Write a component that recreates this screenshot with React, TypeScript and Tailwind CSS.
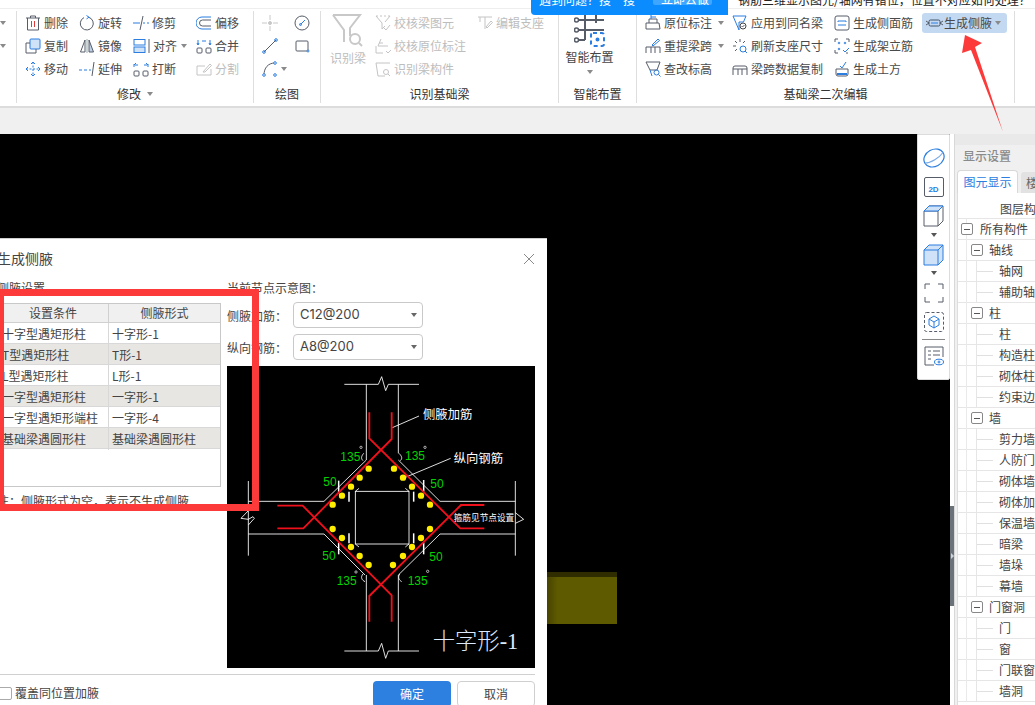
import React from "react";

const G = "#565c68";
const B = "#2b7de0";
const L = "#c4c4c4";

function S({ children, w = 16, h = 16, c = G }: { children: React.ReactNode; w?: number; h?: number; c?: string }) {
  return (
    <svg width={w} height={h} viewBox={`0 0 ${w} ${h}`} fill="none" stroke={c} strokeWidth="1" className="shrink-0">
      {children}
    </svg>
  );
}

function Caret({ c = "#8a8a8a" }: { c?: string }) {
  return <span className="inline-block w-0 h-0 border-x-[3px] border-x-transparent border-t-[4px]" style={{ borderTopColor: c }} />;
}

function Item({ icon, label, dis, caret, gap = 3 }: { icon: React.ReactNode; label: string; dis?: boolean; caret?: boolean; gap?: number }) {
  return (
    <div className={`flex items-center h-[23px] whitespace-nowrap text-[12px] ${dis ? "text-[#bdbdbd]" : "text-[#4a4a4a]"}`} style={{ gap }}>
      {icon}
      <span>{label}</span>
      {caret && (
        <span className="ml-[3px] flex items-center">
          <Caret />
        </span>
      )}
    </div>
  );
}

function GroupLabel({ text, caret }: { text: string; caret?: boolean }) {
  return (
    <div className="mt-auto h-[22px] pt-1 flex items-center justify-center gap-[6px] text-[12px] text-[#333]">
      <span>{text}</span>
      {caret && <Caret />}
    </div>
  );
}

const I = {
  del: (
    <S>
      <path d="M1 3h14M5.5 3V1h5v2M2.5 3v12h11V3" />
      <path d="M6.5 6v6M9.5 6v6" stroke="#e03a3a" />
    </S>
  ),
  copy: (
    <S>
      <rect x="5" y="1" width="10" height="10" rx="1" fill="#cfe2f8" stroke={B} />
      <path d="M5 5H1v10h10v-4" />
    </S>
  ),
  move: (
    <S c={B}>
      <path d="M8 1v14M1 8h14" strokeDasharray="2 1.5" />
      <path d="M6 3l2-2 2 2M6 13l2 2 2-2M3 6L1 8l2 2M13 6l2 2-2 2" />
    </S>
  ),
  rotate: (
    <S>
      <path d="M9.5 2.2A6.5 6.5 0 1 1 5 2.6" />
      <path d="M7.5 0.5l2.5 1.7-2.5 1.7" stroke={B} />
    </S>
  ),
  mirror: (
    <S>
      <path d="M6 2L1.5 14H6z" />
      <path d="M10 2l4.5 12H10z" fill="#bcd0e8" />
      <path d="M8 1v14" stroke="#9aa" />
    </S>
  ),
  extend: (
    <S>
      <path d="M0 9h3M5 9h3M10 9h2" stroke={B} />
      <path d="M15 1l-2 14" />
    </S>
  ),
  trim: (
    <S>
      <path d="M0 8h7" stroke={B} />
      <path d="M10 8h2M14 8h2" stroke={B} />
      <path d="M10 1L7 15" />
    </S>
  ),
  align: (
    <S w={19}>
      <rect x="1" y="1.5" width="11" height="5.5" stroke={B} />
      <rect x="1" y="9" width="11" height="5.5" stroke={B} fill="#cfe2f8" />
      <path d="M16 1v14" />
    </S>
  ),
  brk: (
    <S>
      <rect x="1" y="10" width="5" height="5" rx="1" />
      <rect x="10" y="10" width="5" height="5" rx="1" />
      <path d="M1 6V3M15 6V3M3 2L1 4M5 4H2M13 2l2 2M11 4h3" stroke={B} />
    </S>
  ),
  offset: (
    <S>
      <path d="M15 2H6a5.5 5.5 0 0 0 0 12h9" stroke={B} />
      <path d="M15 5H6.5a2.5 2.5 0 0 0 0 6H15" />
    </S>
  ),
  merge: (
    <S>
      <rect x="1" y="10" width="5" height="5" rx="1" />
      <rect x="10" y="10" width="5" height="5" rx="1" />
      <path d="M2 2v5M14 2v5M1 5l1 2 1-2M13 5l1 2 1-2M6 3l2 0M8 3l2 0" stroke={B} />
    </S>
  ),
  split: (
    <S c={L}>
      <path d="M15 8v6H1V5h8" />
      <path d="M7 11l7-8 1.5 1.5L9 11z" />
    </S>
  ),
  point: (
    <S c="#c8c8c8">
      <path d="M8 0v5M8 11v5M0 8h5M11 8h5" />
      <circle cx="8" cy="8" r="1.5" fill="#c8c8c8" />
    </S>
  ),
  circ: (
    <S>
      <circle cx="8" cy="8" r="7" />
      <path d="M6.5 9.5L11 5" stroke={B} />
      <circle cx="6.5" cy="9.5" r="1" stroke={B} />
    </S>
  ),
  line: (
    <S>
      <path d="M2 14L14 2" />
      <circle cx="2" cy="14" r="1.3" stroke={B} />
      <circle cx="14" cy="2" r="1.3" stroke={B} />
    </S>
  ),
  rect: (
    <S>
      <rect x="2" y="3" width="12" height="10" rx="1" />
      <circle cx="14" cy="13" r="1" stroke={B} fill="#fff" />
    </S>
  ),
  arc: (
    <S>
      <path d="M2 14C2 7 6 2 13 2" />
      <circle cx="2" cy="14" r="1.3" stroke={B} fill="#fff" />
      <circle cx="13" cy="2" r="1.3" stroke={B} fill="#fff" />
      <circle cx="13" cy="14" r="1.3" stroke={B} fill="#fff" />
    </S>
  ),
  chk1: (
    <S c={L}>
      <path d="M1 1h2M5 1h2M9 1h2M13 1h2M1 1l6 7v6l3-3M15 1l-5 6" />
      <path d="M9 13l2 2 4-5" />
    </S>
  ),
  chk2: (
    <S c={L}>
      <path d="M6 1L3 8h10M1 8v7h7M4 5h4M11 13l2 2 3-3" />
    </S>
  ),
  chk3: (
    <S c={L}>
      <path d="M15 2H1l2 13h7" />
      <circle cx="11" cy="11" r="2.5" />
      <path d="M13 13l2 2" />
    </S>
  ),
  seat: (
    <S c={L}>
      <path d="M1 2h14M3 2v5M8 2v12M9 12l5-6 1.5 1.5L10 13z" />
    </S>
  ),
  orig: (
    <S>
      <path d="M1 8h13l1 6H1z" />
      <path d="M4 8V4h8v4" />
      <path d="M6 4V0M6 2h5" stroke={B} />
    </S>
  ),
  reb: (
    <S>
      <path d="M1 15V9h14v6M6 9v6M10 9v6" />
      <path d="M7 7l6-6 1.5 1.5L8 8z" stroke={B} />
    </S>
  ),
  elev: (
    <S>
      <path d="M1 1h14l-3 8H5z" />
      <circle cx="11.5" cy="11.5" r="2.5" stroke={B} />
      <path d="M13.5 13.5l2 2M5 9l2 6" stroke={B} />
    </S>
  ),
  apply: (
    <S>
      <path d="M1 1h13l-2.5 6H7v8z" stroke={B} />
      <circle cx="11" cy="11" r="3" stroke="#444" />
      <path d="M9.5 11l1 1 2-2" />
    </S>
  ),
  fresh: (
    <S>
      <path d="M3 3l2 2M1 8h3M8 1v3M13 3l-2 2M3 13l2-2" />
      <circle cx="11" cy="11" r="3" stroke={B} />
      <path d="M13 13l2 2" stroke={B} />
    </S>
  ),
  span: (
    <S>
      <path d="M1 14V7a2 2 0 0 1 2-2h10a2 2 0 0 1 2 2v7M1 8h14M6 8v6M10 8v6" />
    </S>
  ),
  side: (
    <S>
      <rect x="1" y="1" width="14" height="14" rx="2" />
      <path d="M4 6h8M4 10h8M4 6v1M12 6v1" stroke={B} />
    </S>
  ),
  rack: (
    <S>
      <path d="M1 4V1h3M12 1h3v3M1 12v3h3M12 15h2" />
      <circle cx="5" cy="5" r=".8" stroke={B} />
      <circle cx="11" cy="5" r=".8" stroke={B} />
      <circle cx="5" cy="11" r=".8" stroke={B} />
      <path d="M9 12l2 2 4-4" stroke={B} />
    </S>
  ),
  earth: (
    <S>
      <path d="M2 8l12 0v5a2 2 0 0 1-2 2H4a2 2 0 0 1-2-2z" />
      <path d="M3 13h10" stroke={B} strokeWidth="2" />
      <path d="M6 5l2 2 4-6" stroke={B} />
    </S>
  ),
  haunch: (
    <S w={19}>
      <path d="M1 6l3 2-3 2M18 6l-3 2 3 2" />
      <rect x="4" y="5" width="11" height="6" rx="1.5" stroke="#456" />
      <path d="M6 8h7" stroke={B} />
    </S>
  ),
};

const rows = [
  ["十字型遇矩形柱", "十字形-1"],
  ["T型遇矩形柱", "T形-1"],
  ["L型遇矩形柱", "L形-1"],
  ["一字型遇矩形柱", "一字形-1"],
  ["一字型遇矩形端柱", "一字形-4"],
  ["基础梁遇圆形柱", "基础梁遇圆形柱"],
];

const tree: [number, string][] = [
  [0, "所有构件"],
  [1, "轴线"],
  [2, "轴网"],
  [2, "辅助轴线"],
  [1, "柱"],
  [2, "柱"],
  [2, "构造柱"],
  [2, "砌体柱"],
  [2, "约束边缘"],
  [1, "墙"],
  [2, "剪力墙"],
  [2, "人防门框"],
  [2, "砌体墙"],
  [2, "砌体加筋"],
  [2, "保温墙"],
  [2, "暗梁"],
  [2, "墙垛"],
  [2, "幕墙"],
  [1, "门窗洞"],
  [2, "门"],
  [2, "窗"],
  [2, "门联窗"],
  [2, "墙洞"],
];

function Select({ value }: { value: string }) {
  return (
    <div className="w-[130px] h-[26px] border border-[#c9c9c9] rounded-[4px] bg-white flex items-center justify-between pl-[6px] pr-[5px] text-[13px] text-[#444] font-['Inter']">
      <span>{value}</span>
      <Caret c="#666" />
    </div>
  );
}

function Diagram() {
  const dots = [
    [431, 326], [507, 326], [404, 353], [534, 353], [378, 380], [561, 380], [351, 407], [588, 407], [323, 434], [615, 434],
    [323, 507], [615, 507], [351, 534], [588, 534], [378, 561], [561, 561], [404, 588], [534, 588], [431, 615], [504, 615],
  ];
  const green: [number, number, string][] = [
    [346, 303, "135"], [540, 300, "135"], [335, 675, "135"], [548, 675, "135"],
    [295, 378, "50"], [616, 384, "50"], [292, 600, "50"], [613, 603, "50"],
  ];
  const ticks = [
    [341, 362, 341, 400], [372, 395, 372, 425], [596, 360, 596, 395], [566, 395, 566, 425],
    [341, 548, 341, 583], [372, 520, 372, 550], [596, 548, 596, 583], [566, 520, 566, 550],
  ];
  return (
    <svg viewBox="6 18 924 906" className="w-[308px] h-[302px] block bg-black">
      <g stroke="#fff" strokeWidth="2.6" fill="none">
        <path d="M358 73H460L470 50 482 92 490 73H582M424 73V300M520 73V280" />
        <path d="M358 873H460L470 850 482 895 490 873H582M424 645V873M520 645V873" />
        <path d="M70 363V587M70 424H297M70 522H297M871 363V587M645 424H871M645 522H871" />
        <path d="M70 452L48 475 70 478 84 470 88 475 70 495" />
        <path d="M871 458L896 478 871 490" />
        <rect x="391" y="394" width="161" height="158" />
        <path d="M391 394L402 385M552 394L541 385M391 552L402 561M552 552L541 561" />
        <path d="M297 522L420 645M645 522L520 645M520 300L645 424M424 300L297 424" />
        <path d="M502 203L582 168M534 355L677 295" />
        <path d="M416 280C408 290 408 296 414 302M522 280C532 290 532 296 526 302M414 642C406 652 410 660 420 665M524 642C518 652 522 660 530 665" />
      </g>
      <g stroke="#fff" strokeWidth="4.5">
        {ticks.map((t, i) => (
          <line key={i} x1={t[0]} y1={t[1]} x2={t[2]} y2={t[3]} />
        ))}
      </g>
      <g stroke="#f0101c" strokeWidth="5.5" fill="none">
        <path d="M433 157V235L706 505H778" />
        <path d="M500 157V237L235 505H157" />
        <path d="M157 437H233L500 706V785" />
        <path d="M778 435H708L433 708V785" />
      </g>
      {dots.map((d, i) => (
        <circle key={i} cx={d[0]} cy={d[1]} r="9.5" fill="#ffee00" />
      ))}
      <g fill="#00d400" fontSize="36" fontFamily="'Liberation Sans', sans-serif">
        {green.map((g, i) => (
          <text key={i} x={g[0]} y={g[1]}>
            {g[2]}
          </text>
        ))}
      </g>
      <g stroke="#fff" strokeWidth="2" fill="none">
        <circle cx="408" cy="262" r="3.5" />
        <circle cx="600" cy="262" r="3.5" />
        <circle cx="393" cy="636" r="3.5" />
        <circle cx="608" cy="634" r="3.5" />
      </g>
      <g fill="#fff" fontFamily="'Noto Sans CJK SC', sans-serif">
        <text x="594" y="177" fontSize="37">侧腋加筋</text>
        <text x="686" y="309" fontSize="37">纵向钢筋</text>
        <text x="686" y="484" fontSize="26">箍筋见节点设置</text>
      </g>
      <text x="623" y="868" fontSize="67" fill="#dce9ff" fontFamily="'Liberation Serif', 'Noto Sans CJK SC', serif" fontWeight="300">
        十字形-1
      </text>
    </svg>
  );
}

function Dialog() {
  return (
    <div className="absolute left-[-15px] top-[104px] w-[562px] h-[480px] bg-white border-t border-[#cfcfcf] flex flex-col px-3 text-[12px] text-[#444]">
      <div className="h-10 pb-[1px] flex items-center justify-between shrink-0">
        <span className="text-[14px] text-[#444]">生成侧腋</span>
        <svg width="12" height="12" viewBox="0 0 12 12" stroke="#8a8a8a" strokeWidth="1">
          <path d="M1 1l10 10M11 1L1 11" />
        </svg>
      </div>
      <div className="flex gap-[6px]">
        <div className="w-[224px]">
          <div className="h-4 leading-[18px]">侧腋设置</div>
          <div className="mt-2 h-[184px] border border-[#c8c8c8] bg-white">
            <div className="grid grid-cols-[111px_1fr] h-[19px] bg-[#f0f0f0] border-b border-[#d0d0d0]">
              <div className="text-center leading-[18px] border-r border-[#d0d0d0]">设置条件</div>
              <div className="text-center leading-[18px]">侧腋形式</div>
            </div>
            {rows.map((r, i) => (
              <div key={i} className={`grid grid-cols-[111px_1fr] h-[21px] border-b border-[#d8d8d8] ${i % 2 ? "bg-[#e8e6e3]" : "bg-white"}`}>
                <div className="pl-[4px] leading-[22px] border-r border-[#d8d8d8] whitespace-nowrap">{r[0]}</div>
                <div className="pl-[3px] leading-[22px] whitespace-nowrap">{r[1]}</div>
              </div>
            ))}
          </div>
          <div className="mt-[6px] leading-4 whitespace-nowrap">{"注\uFF1A侧腋形式为空\uFF0C表示不生成侧腋"}</div>
        </div>
        <div className="w-[308px]">
          <div className="h-4 leading-[18px]">{"当前节点示意图\uFF1A"}</div>
          <div className="mt-[7px] flex items-center gap-[9px]">
            <span className="w-[57px] whitespace-nowrap pt-[1px]">{"侧腋加筋\uFF1A"}</span>
            <Select value="C12@200" />
          </div>
          <div className="mt-[6px] flex items-center gap-[9px]">
            <span className="w-[57px] whitespace-nowrap pt-[1px]">{"纵向钢筋\uFF1A"}</span>
            <Select value="A8@200" />
          </div>
          <div className="mt-[6px]">
            <Diagram />
          </div>
        </div>
      </div>
      <div className="mt-[6px] pt-[6px] border-t border-[#d0d0d0] flex items-center justify-between">
        <div className="flex items-center gap-[3px] ml-[1px] mb-[2px]">
          <span className="w-[14px] h-[13px] border border-[#aaa] rounded-[2px] bg-white" />
          <span>覆盖同位置加腋</span>
        </div>
        <div className="flex gap-[6px]">
          <div className="w-[78px] h-[26px] rounded-[4px] bg-[#2d7fe0] text-white text-center leading-[26px]">确定</div>
          <div className="w-[78px] h-[26px] rounded-[4px] border border-[#cfcfcf] bg-white text-center leading-[24px]">取消</div>
        </div>
      </div>
    </div>
  );
}

function Toolbar() {
  return (
    <div className="absolute left-[917px] top-0 w-[33px] h-[246px] bg-white rounded-b-[2px] border border-[#dcdcdc] flex flex-col items-center pt-[12px]">
      <svg width="22" height="22" viewBox="0 0 22 22" fill="none" stroke={B} strokeWidth="1.2">
        <ellipse cx="11" cy="11" rx="10.5" ry="8.5" transform="rotate(-28 11 11)" />
        <path d="M2 16C8 16 16 11 20.5 5" stroke="#7aa9e8" />
      </svg>
      <div className="mt-2 w-[20px] h-[20px] border border-[#565c68] rounded-[2px] flex items-end justify-center text-[8px] leading-[12px] font-bold text-[#2b7de0] font-['Liberation_Sans']">2D</div>
      <svg width="22" height="22" viewBox="0 0 22 22" fill="none" stroke={G} className="mt-2">
        <path d="M1 6l5-5h14v15l-5 5H1z" />
        <path d="M1 6h14l5-5M15 6v15" />
        <path d="M1 6l5-5h14l-5 5z" fill="#cfe2f8" stroke={B} />
      </svg>
      <div className="mt-1 h-2 flex items-center"><Caret c="#555" /></div>
      <svg width="22" height="22" viewBox="0 0 22 22" fill="#cfe2f8" stroke={B} className="mt-[5px]">
        <path d="M1 6l5-5h14v15l-5 5H1z" />
        <path d="M1 6h14l5-5M15 6v15" fill="none" />
      </svg>
      <div className="mt-[3px] h-2 flex items-center"><Caret c="#555" /></div>
      <svg width="20" height="20" viewBox="0 0 20 20" fill="none" stroke={G} className="mt-[6px]">
        <path d="M1 6V1h5M14 1h5v5M19 14v5h-5M6 19H1v-5" />
      </svg>
      <svg width="20" height="20" viewBox="0 0 20 20" fill="none" stroke={G} className="mt-[9px]">
        <rect x=".5" y=".5" width="19" height="19" rx="2" strokeDasharray="3 2" />
        <path d="M10 4l5 3v6l-5 3-5-3V7zM5 7l5 3 5-3M10 10v6" stroke={B} />
      </svg>
      <div className="mt-[7px] w-[23px] border-t border-[#888]" />
      <svg width="20" height="20" viewBox="0 0 20 20" fill="none" stroke={G} className="mt-[6px]">
        <path d="M19 11V1H1v18h9" />
        <path d="M4 5h3M9 5h7M4 9h3M9 9h7M4 13h3" />
        <ellipse cx="15" cy="16" rx="4.5" ry="2.8" stroke={B} />
        <circle cx="15" cy="16" r="1" stroke={B} />
      </svg>
    </div>
  );
}

function Panel() {
  return (
    <div className="w-[85px] shrink-0 bg-white flex">
      <div className="w-[4px] shrink-0 bg-white flex flex-col">
        <div className="h-[372px]" />
        <div className="h-[100px] bg-[#6c7279] flex items-center justify-center">
          <span className="w-0 h-0 border-y-[3px] border-y-transparent border-l-[3px] border-l-[#cfd3d8]" />
        </div>
      </div>
      <div className="w-[81px] bg-[#f0f0f0] border-l border-[#d8d8d8] flex flex-col overflow-hidden text-[12px] text-[#444]">
        <div className="h-[11px] bg-[#e9e9e9] shrink-0" />
        <div className="h-[22px] leading-[22px] pl-2 text-[#8a8a8a] font-medium shrink-0 whitespace-nowrap">显示设置</div>
        <div className="h-[26px] pl-[2px] pt-[3px] flex items-end gap-[3px] shrink-0 whitespace-nowrap">
          <div className="w-[61px] shrink-0 h-[23px] bg-white border border-[#d8d8d8] border-b-0 rounded-t-[4px] text-[#2b7de0] text-center leading-[22px]">图元显示</div>
          <div className="w-[40px] shrink-0 h-[21px] bg-[#e2e2e2] rounded-t-[3px] pl-[5px] leading-[21px] text-[#666]">楼层</div>
        </div>
        <div className="flex-1 ml-[2px] bg-white border-l border-[#ddd] pt-[6px] overflow-hidden">
          <div className="h-5 leading-5 pl-[42px] whitespace-nowrap border-b border-[#e6e6e6]">图层构成</div>
          {tree.map(([lv, t], i) => (
            <div key={i} className="relative h-[21px] border-b border-[#e6e6e6] flex items-center whitespace-nowrap">
              <span className="absolute left-[8px] top-0 bottom-[-1px] border-l border-[#eaeaea]" />
              {lv === 2 && <span className="absolute left-[18px] top-0 bottom-[-1px] border-l border-[#e6e6e6]" />}
              {lv === 0 && (
                <span className="relative shrink-0 ml-[3px] w-[12px] h-[12px] border border-[#888] rounded-[2px] bg-white flex items-center justify-center mr-[7px]">
                  <span className="w-[6px] border-t border-[#555]" />
                </span>
              )}
              {lv === 1 && (
                <span className="relative shrink-0 ml-[13px] w-[12px] h-[12px] border border-[#888] rounded-[2px] bg-white flex items-center justify-center mr-[6px]">
                  <span className="w-[6px] border-t border-[#555]" />
                </span>
              )}
              {lv === 2 && <span className="shrink-0 ml-[18px] w-[17px] border-t border-[#e0e0e0] mr-[6px]" />}
              <span className="shrink-0">{t}</span>
            </div>
          ))}
        </div>
      </div>
    </div>
  );
}

export default function App() {
  return (
    <div className="relative w-[1035px] h-[705px] overflow-hidden bg-white font-['Noto_Sans_CJK_SC',sans-serif]">
      {/* ribbon */}
      <div className="h-[9px] bg-white border-b border-[#eeeeee]" />
      <div className="h-[99px] bg-white border-b-2 border-[#dcdcdc] flex items-start">
        <div className="w-[17px] h-[92px] mt-[2px] border-r border-[#dedede] flex flex-col">
          <div className="h-[23px] flex items-center"><Caret /></div>
          <div className="h-[23px] flex items-center"><Caret /></div>
        </div>
        <div className="w-[237px] h-[92px] mt-[2px] border-r border-[#dedede] flex flex-col">
          <div className="flex pl-[8px]">
            <div className="w-[54px]">
              <Item icon={I.del} label="删除" />
              <Item icon={I.copy} label="复制" />
              <Item icon={I.move} label="移动" />
            </div>
            <div className="w-[54px]">
              <Item icon={I.rotate} label="旋转" />
              <Item icon={I.mirror} label="镜像" />
              <Item icon={I.extend} label="延伸" />
            </div>
            <div className="w-[63px]">
              <Item icon={I.trim} label="修剪" />
              <Item icon={I.align} label="对齐" caret gap={1} />
              <Item icon={I.brk} label="打断" />
            </div>
            <div>
              <Item icon={I.offset} label="偏移" />
              <Item icon={I.merge} label="合并" />
              <Item icon={I.split} label="分割" dis />
            </div>
          </div>
          <GroupLabel text="修改" caret />
        </div>
        <div className="w-[67px] h-[92px] mt-[2px] border-r border-[#dedede] flex flex-col">
          <div className="grid grid-cols-[32px_16px] pl-[8px]">
            <div className="h-[23px] flex items-center">{I.point}</div>
            <div className="h-[23px] flex items-center">{I.circ}</div>
            <div className="h-[23px] flex items-center">{I.line}</div>
            <div className="h-[23px] flex items-center">{I.rect}</div>
            <div className="h-[23px] flex items-center gap-[3px]">{I.arc}<Caret /></div>
          </div>
          <GroupLabel text="绘图" />
        </div>
        <div className="w-[238px] h-[92px] mt-[2px] border-r border-[#dedede] flex flex-col">
          <div className="flex">
            <div className="w-[54px] pl-[10px] h-[69px] flex flex-col items-start pt-[2px]">
              <svg width="32" height="36" viewBox="0 0 32 36" fill="none" stroke="#c8c8c8" strokeWidth="2">
                <path d="M2 2h27l-10 13v8M2 2l11 15v12" />
                <circle cx="24" cy="26" r="5" />
                <path d="M28 30l3 3" />
              </svg>
              <span className="text-[12px] text-[#bdbdbd] ml-[-1px] whitespace-nowrap">识别梁</span>
            </div>
            <div className="w-[102px]">
              <Item icon={I.chk1} label="校核梁图元" dis />
              <Item icon={I.chk2} label="校核原位标注" dis />
              <Item icon={I.chk3} label="识别梁构件" dis />
            </div>
            <div>
              <Item icon={I.seat} label="编辑支座" dis />
            </div>
          </div>
          <GroupLabel text="识别基础梁" />
        </div>
        <div className="w-[78px] h-[92px] mt-[2px] border-r border-[#dedede] flex flex-col">
          <div className="h-[69px] flex flex-col items-center pr-4 pt-[2px]">
            <svg width="32" height="36" viewBox="0 0 32 36" fill="none" stroke="#565c68" strokeWidth="2">
              <path d="M4 7h26M4 17h26M11 0v27M22 0v10" />
              <circle cx="2.5" cy="7" r="2" strokeWidth="1.5" />
              <circle cx="2.5" cy="17" r="2" strokeWidth="1.5" />
              <circle cx="2.5" cy="27" r="2" strokeWidth="1.5" />
              <path d="M4 27h7" />
              <rect x="17" y="20" width="13" height="13" rx="2" stroke={B} strokeDasharray="4 3" />
              <circle cx="23.5" cy="26.5" r="1" fill={B} stroke={B} />
            </svg>
            <span className="text-[12px] text-[#444] leading-[16px] whitespace-nowrap">智能布置</span>
            <span className="mt-[5px] flex"><Caret /></span>
          </div>
          <GroupLabel text="智能布置" />
        </div>
        <div className="w-[378px] h-[92px] mt-[2px] border-r border-[#dedede] flex flex-col">
          <div className="flex pl-[8px]">
            <div className="w-[87px]">
              <Item icon={I.orig} label="原位标注" caret />
              <Item icon={I.reb} label="重提梁跨" caret />
              <Item icon={I.elev} label="查改标高" />
            </div>
            <div className="w-[102px]">
              <Item icon={I.apply} label="应用到同名梁" />
              <Item icon={I.fresh} label="刷新支座尺寸" />
              <Item icon={I.span} label="梁跨数据复制" />
            </div>
            <div className="w-[88px]">
              <Item icon={I.side} label="生成侧面筋" />
              <Item icon={I.rack} label="生成架立筋" />
              <Item icon={I.earth} label="生成土方" />
            </div>
            <div className="w-[85px] h-[20px] mt-[2px] bg-[#c3d9f2] rounded-[3px] pl-[3px] flex items-center">
              <Item icon={I.haunch} label="生成侧腋" caret gap={0} />
            </div>
          </div>
          <GroupLabel text="基础梁二次编辑" />
        </div>
      </div>
      <div className="h-[26px] bg-[#f0f0f0]" />

      {/* work area */}
      <div className="h-[571px] flex">
        <div className="relative flex-1 bg-black overflow-hidden">
          <div className="absolute left-[547px] top-[438px] w-[70px] h-[52px] bg-linear-to-r from-[#474400] to-[#5e5a00] to-[15%] border-t-[5px] border-[#2f2d00]" />
          <Dialog />
          <Toolbar />
        </div>
        <Panel />
      </div>

      {/* overlays */}
      <div className="absolute left-[531px] top-0 w-[197px] h-[15px] bg-[#0a8cff] rounded-bl-[4px] overflow-hidden text-white text-[12px]">
        <span className="absolute left-[8px] top-[-9px] whitespace-nowrap">{"遇到问题\uFF1F搜一搜"}</span>
        <span className="absolute left-[122px] top-0 w-[59px] h-[5px] bg-[#3ea6ff] rounded-b-[2px]" />
        <span className="absolute left-[130px] top-[-10px] whitespace-nowrap">立即去做</span>
      </div>
      <div className="absolute left-[738px] top-[-9px] text-[12px] text-[#222] whitespace-nowrap">{"钢筋三维显示图元/轴网有错位\uFF0C位置不对应如何处理\uFF1F"}</div>
      <div className="absolute left-[-3px] top-[289px] w-[262px] h-[222px] border-[7px] border-[#fd3a3a]" />
      <svg className="absolute left-[955px] top-[30px]" width="55" height="105" viewBox="955 30 55 105">
        <path d="M965 35L982 43 975 47 1003 132 971 50 962 53z" fill="#fd3a3a" />
      </svg>
    </div>
  );
}
